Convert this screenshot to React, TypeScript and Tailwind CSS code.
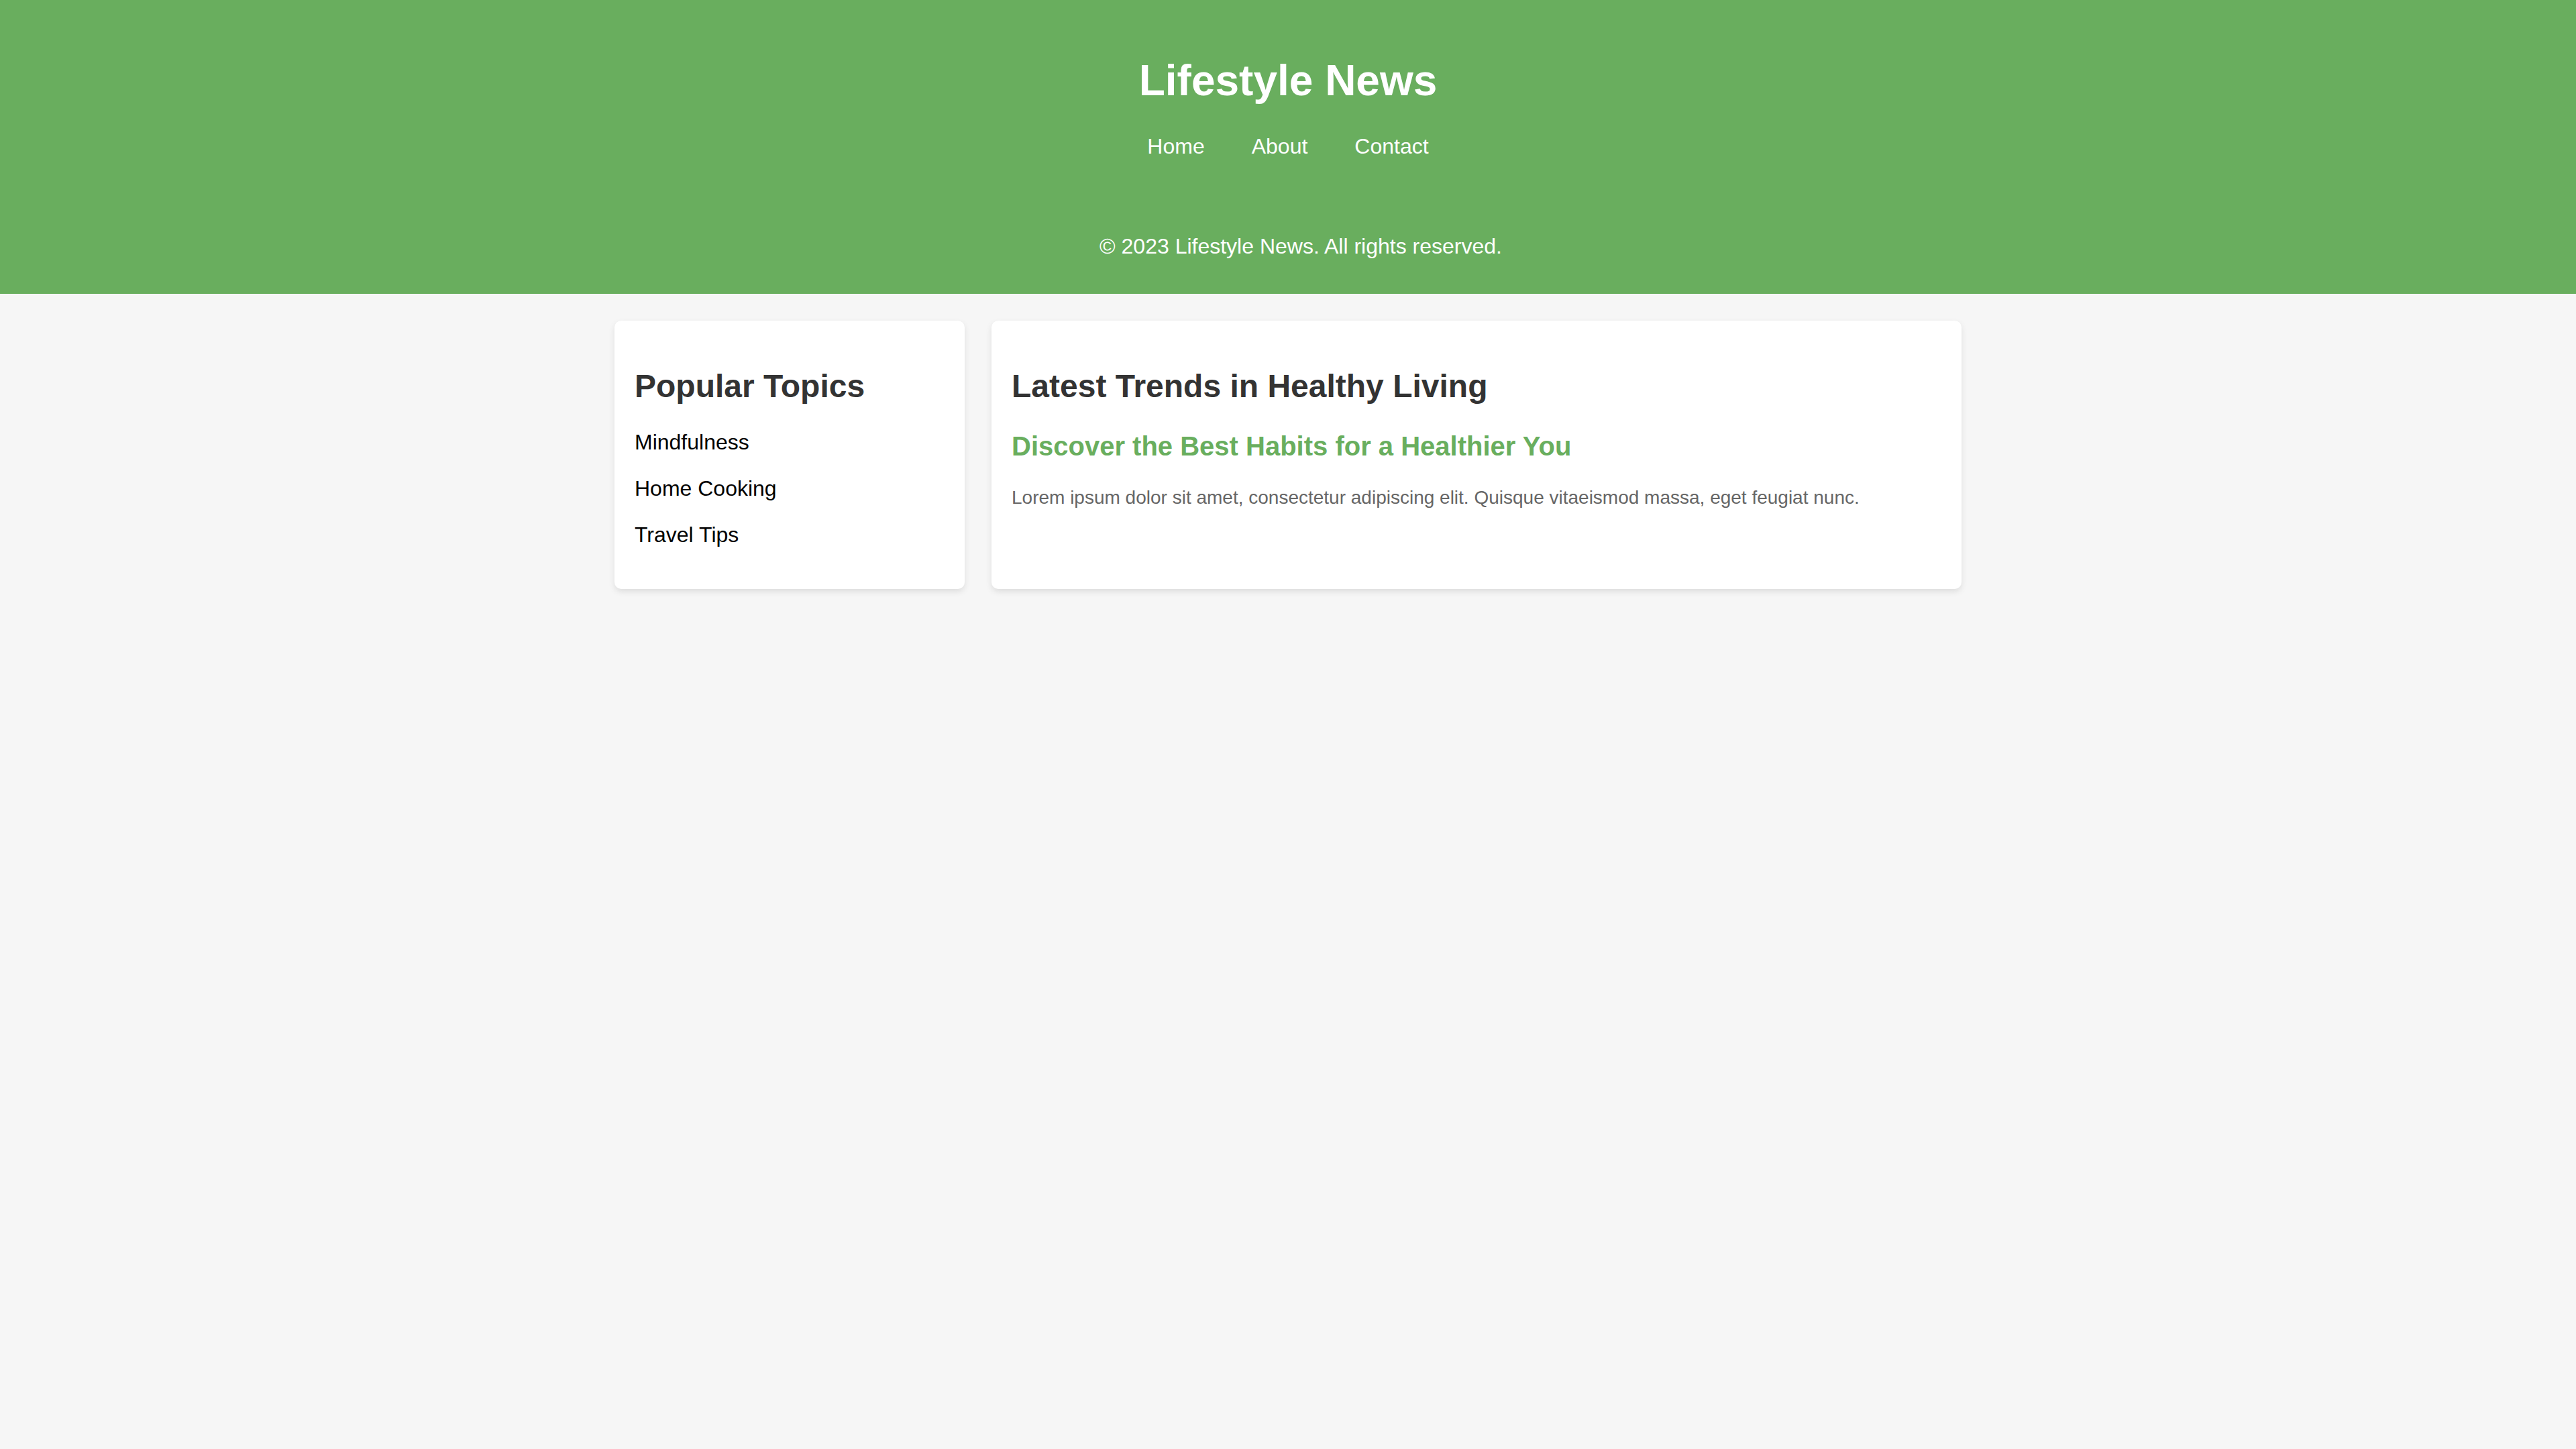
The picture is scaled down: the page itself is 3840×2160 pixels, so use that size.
import React from "react";

const topics = ["Mindfulness", "Home Cooking", "Travel Tips"];

const App = () => {
    return (
        <div className="min-h-screen bg-[#f6f6f6] font-['Liberation_Sans',Arial,sans-serif] leading-[normal]">
            <header className="bg-[#69ae5e] text-white text-center pt-[40px] pb-[52px]">
                <h1 className="text-[64px] font-bold my-[43px]">Lifestyle News</h1>
                <nav>
                    <ul className="flex justify-center gap-[70px] text-[32px]">
                        <li>
                            <a href="#">Home</a>
                        </li>
                        <li>
                            <a href="#">About</a>
                        </li>
                        <li>
                            <a href="#">Contact</a>
                        </li>
                    </ul>
                </nav>
                <p className="mt-[112px] pl-[38px] text-[32px]">© 2023 Lifestyle News. All rights reserved.</p>
            </header>

            <main className="w-[2008px] mx-auto mt-[40px] flex gap-[40px]">
                <aside className="w-[522px] bg-white rounded-[10px] p-[30px] shadow-[0_4px_10px_rgba(0,0,0,0.1)]">
                    <h2 className="text-[48px] font-bold text-[#333] mt-[40px] mb-[38px]">Popular Topics</h2>
                    <ul>
                        {topics.map((topic) => (
                            <li key={topic} className="text-[32px] text-black mb-[32px]">
                                {topic}
                            </li>
                        ))}
                    </ul>
                </aside>

                <section className="flex-1 bg-white rounded-[10px] p-[30px] shadow-[0_4px_10px_rgba(0,0,0,0.1)]">
                    <h2 className="text-[48px] font-bold text-[#333] my-[40px]">Latest Trends in Healthy Living</h2>
                    <h3 className="text-[40px] font-bold text-[#69ae5e]">Discover the Best Habits for a Healthier You</h3>
                    <p className="text-[28px] text-[#666] mt-[38px] mb-[28px]">
                        Lorem ipsum dolor sit amet, consectetur adipiscing elit. Quisque vitaeismod massa, eget feugiat nunc.
                    </p>
                </section>
            </main>
        </div>
    );
};

export default App;
